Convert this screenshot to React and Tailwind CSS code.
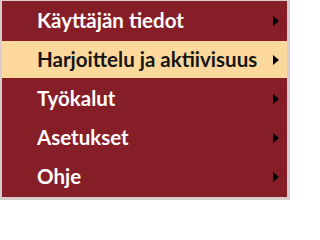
const items = [
  { label: "Käyttäjän tiedot" },
  { label: "Harjoittelu ja aktiivisuus", active: true },
  { label: "Työkalut" },
  { label: "Asetukset" },
  { label: "Ohje" },
];

const Arrow = () => (
  <svg width="6" height="10" viewBox="0 0 6 10" className="shrink-0">
    <path d="M0 0 L6 5 L0 10 Z" fill="#000" />
  </svg>
);

export default function App() {
  return (
    <div className="w-[290px] h-[200px] bg-[#d8cccc] pt-[1px] pl-[2px]">
      <ul
        className="w-[285px] h-[196px] bg-[#861e28] flex flex-col"
        style={{ fontFamily: "Lato, 'Open Sans', sans-serif" }}
      >
        {items.map((item) => (
          <li key={item.label} className="h-[39px] py-[1px]">
            <div
              className={`h-full flex items-center justify-between pl-[35px] pr-[8px] text-[20.5px] font-bold ${
                item.active ? "bg-[#fdd89c] text-[#161616]" : "text-white"
              }`}
            >
              <span className="leading-none">{item.label}</span>
              <Arrow />
            </div>
          </li>
        ))}
      </ul>
    </div>
  );
}
